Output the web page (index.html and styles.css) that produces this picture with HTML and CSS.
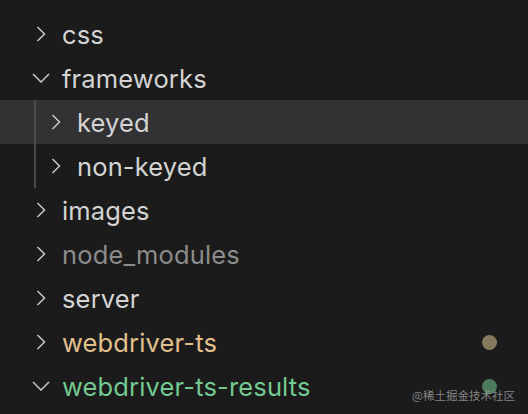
FILE: index.html
```html
<!DOCTYPE html>
<html>
<head>
<meta charset="utf-8">
<link rel="stylesheet" href="styles.css">
</head>
<body>
<div class="tree">
  <div class="row"><span class="twistie"><svg class="chev-r" viewBox="0 0 10 16"><polyline points="1.5,1 8.5,8 1.5,15"/></svg></span><span class="label">css</span></div>
  <div class="row"><span class="twistie"><svg class="chev-d" viewBox="0 0 18 10"><polyline points="1,1 9,9 17,1"/></svg></span><span class="label">frameworks</span></div>
  <div class="row child hover"><span class="guide"></span><span class="twistie"><svg class="chev-r" viewBox="0 0 10 16"><polyline points="1.5,1 8.5,8 1.5,15"/></svg></span><span class="label">keyed</span></div>
  <div class="row child"><span class="guide"></span><span class="twistie"><svg class="chev-r" viewBox="0 0 10 16"><polyline points="1.5,1 8.5,8 1.5,15"/></svg></span><span class="label">non-keyed</span></div>
  <div class="row"><span class="twistie"><svg class="chev-r" viewBox="0 0 10 16"><polyline points="1.5,1 8.5,8 1.5,15"/></svg></span><span class="label">images</span></div>
  <div class="row"><span class="twistie"><svg class="chev-r" viewBox="0 0 10 16"><polyline points="1.5,1 8.5,8 1.5,15"/></svg></span><span class="label ignored">node_modules</span></div>
  <div class="row"><span class="twistie"><svg class="chev-r" viewBox="0 0 10 16"><polyline points="1.5,1 8.5,8 1.5,15"/></svg></span><span class="label">server</span></div>
  <div class="row"><span class="twistie"><svg class="chev-r" viewBox="0 0 10 16"><polyline points="1.5,1 8.5,8 1.5,15"/></svg></span><span class="label modified">webdriver-ts</span><span class="dot dot-modified"></span></div>
  <div class="row"><span class="twistie"><svg class="chev-d" viewBox="0 0 18 10"><polyline points="1,1 9,9 17,1"/></svg></span><span class="label untracked">webdriver-ts-results</span><span class="dot dot-untracked"></span></div>
</div>
<div class="watermark">@稀土掘金技术社区</div>
</body>
</html>
```
FILE: styles.css
```css
html, body {
  margin: 0;
  padding: 0;
  background: #1b1b1b;
  width: 528px;
  height: 414px;
  overflow: hidden;
}
body {
  position: relative;
  font-family: Inter, "Noto Sans", sans-serif;
}
.tree {
  display: flex;
  flex-direction: column;
  padding-top: 12px;
}
.row {
  height: 44px;
  display: flex;
  align-items: center;
  padding-left: 31px;
  padding-right: 31px;
}
.row.child {
  padding-left: 34px;
}
.row.hover {
  background: #323234;
}
.guide {
  align-self: stretch;
  width: 10px;
  border-left: 2px solid #4a4a4a;
}
.twistie {
  width: 20px;
  height: 44px;
  display: flex;
  align-items: center;
  justify-content: center;
  flex: none;
}
.twistie svg {
  fill: none;
  stroke: #c8c8c8;
  stroke-width: 1.5;
}
.chev-r {
  width: 10px;
  height: 16px;
}
.chev-d {
  width: 18px;
  height: 10px;
}
.label {
  margin-left: 11px;
  font-size: 25.5px;
  letter-spacing: 0.15px;
  color: #d4d4d4;
  flex: 1;
  white-space: nowrap;
}
.label.ignored { color: #8c8c8c; }
.label.modified { color: #e2c08d; }
.label.untracked { color: #73c991; }
.dot {
  width: 15px;
  height: 15px;
  border-radius: 50%;
  flex: none;
}
.dot-modified { background: #857a5c; }
.dot-untracked { background: #4c7a5c; }
.watermark {
  position: absolute;
  right: 13px;
  bottom: 11px;
  font-family: "Noto Sans CJK SC", sans-serif;
  font-size: 11.5px;
  color: rgba(170, 170, 170, 0.75);
}
```
